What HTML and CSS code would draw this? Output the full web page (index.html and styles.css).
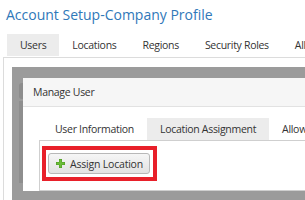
FILE: index.html
```html
<!DOCTYPE html>
<html>
<head>
<meta charset="utf-8">
<link rel="stylesheet" href="styles.css">
</head>
<body>
<h1 class="title">Account Setup-Company Profile</h1>
<nav class="tabs">
  <span class="tab active">Users</span>
  <span class="tab">Locations</span>
  <span class="tab">Regions</span>
  <span class="tab">Security Roles</span>
  <span class="tab">Allowances</span>
</nav>
<div class="panel">
  <div class="overlay">
    <div class="behind">
      <span class="behind-top"></span>
      <span class="behind-bar"></span>
    </div>
    <div class="modal">
      <div class="modal-header">Manage User</div>
      <div class="modal-body">
        <nav class="tabs inner">
          <span class="tab">User Information</span>
          <span class="tab active">Location Assignment</span>
          <span class="tab">Allowances</span>
        </nav>
        <div class="tab-content">
          <div class="highlight">
            <button class="btn">
              <svg class="plus" width="9" height="9" viewBox="0 0 9 9">
                <path d="M3 0h3v3h3v3h-3v3h-3v-3h-3v-3h3z" fill="#4e9a24"/>
                <path d="M3.5 0.5h2v3h3v2h-3v3h-2v-3h-3v-2h3z" fill="#6dbd3a"/>
              </svg>
              <span>Assign Location</span>
            </button>
          </div>
        </div>
      </div>
    </div>
  </div>
</div>
</body>
</html>
```

FILE: styles.css
```css
html, body {
  margin: 0;
  padding: 0;
  width: 305px;
  height: 200px;
  overflow: hidden;
  background: #fff;
  font-family: "Open Sans", "Noto Sans", sans-serif;
  color: #333;
}

.title {
  margin: 0;
  padding: 4px 0 0 6px;
  font-size: 14px;
  font-weight: normal;
  line-height: 22px;
  color: #2f78b9;
  white-space: nowrap;
}

.tabs {
  display: flex;
  margin: 8px 0 0 7px;
  white-space: nowrap;
}

.tab {
  padding: 0 13px;
  font-size: 10.5px;
  letter-spacing: -0.3px;
  line-height: 22px;
  color: #333;
}

.tab.active {
  background: #ececec;
}

.panel {
  position: relative;
  margin: 1px 0 0 3px;
  height: 142px;
  border: 1px solid #dcdcdc;
  border-right: none;
  border-bottom: none;
}

.overlay {
  position: absolute;
  left: 8px;
  top: 9px;
  right: 0;
  bottom: 0;
  background: #9b9b9b;
  display: flex;
  align-items: flex-start;
  padding-left: 7px;
  overflow: hidden;
}

.behind {
  display: flex;
  flex-direction: column;
  gap: 2px;
  width: 4px;
  margin-top: 16px;
}

.behind-top {
  height: 16px;
  background: #8c8c8c;
  border-radius: 3px 0 0 3px;
}

.behind-bar {
  height: 82px;
  background: #8e8e8e;
}

.modal {
  flex: 1;
  margin-top: 11px;
  background: #fff;
  min-width: 0;
}

.modal-header {
  height: 28px;
  line-height: 28px;
  padding-left: 10px;
  background: #f6f6f6;
  border-bottom: 1px solid #e2e2e2;
  font-size: 10.5px;
  letter-spacing: -0.3px;
  color: #333;
}

.modal-body {
  padding: 11px 0 0 16px;
}

.tabs.inner {
  margin: 0 0 0 3px;
}

.tab-content {
  border: 1px solid #cfcfcf;
  border-right: none;
  padding: 5px 0 9px 2px;
}

.highlight {
  display: inline-flex;
  border: 4px solid #e8202a;
  padding: 3px 3px 3px 2px;
}

.btn {
  display: flex;
  align-items: center;
  gap: 5px;
  height: 21px;
  width: 102px;
  padding: 0 0 0 7px;
  border: 1px solid #b8b8b8;
  border-radius: 3px;
  background: linear-gradient(#f6f6f6, #e2e2e2);
  font-family: "Open Sans", "Noto Sans", sans-serif;
  font-size: 10.5px;
  letter-spacing: -0.2px;
  color: #333;
  white-space: nowrap;
}

.plus {
  flex: none;
}
```
